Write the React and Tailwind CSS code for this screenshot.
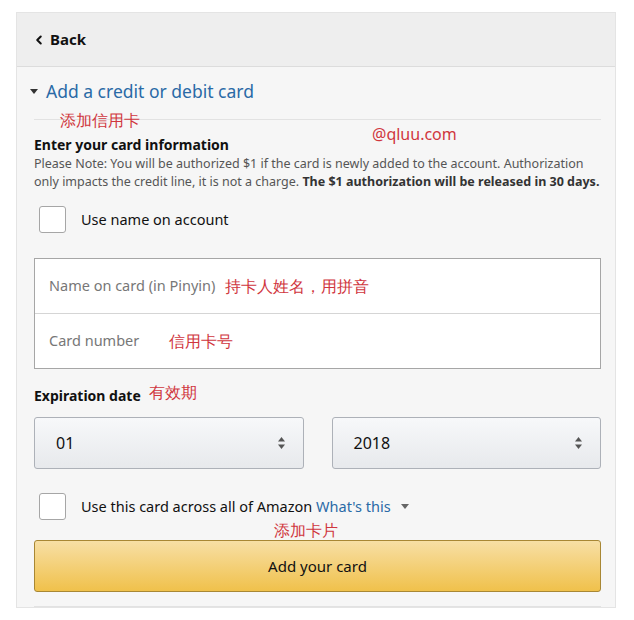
import { ChevronLeft } from 'lucide-react'

const red = 'text-[#d0363e]'

function Checkbox() {
  return <span className="block h-[27px] w-[27px] shrink-0 rounded-[3px] border border-[#a6a6a6] bg-white" />
}

function Updown() {
  return (
    <svg width="9" height="14" viewBox="0 0 9 14" className="shrink-0">
      <path d="M4.5 1 L8 5.5 H1 Z" fill="#555" />
      <path d="M4.5 13 L8 8.5 H1 Z" fill="#555" />
    </svg>
  )
}

function SelectBox({ value }) {
  return (
    <div className="flex h-[52px] flex-1 items-center justify-between rounded-[3px] border border-[#adb1b8] bg-[linear-gradient(#f7f8fa,#e7e9ec)] pl-[21px] pr-[17px] text-[16px] text-[#111]">
      <span>{value}</span>
      <Updown />
    </div>
  )
}

export default function App() {
  return (
    <div className="min-h-[620px] bg-white pt-[12px] font-['Noto_Sans','Open_Sans',sans-serif]">
      <div className="ml-[16px] w-[600px] border border-[#e4e4e4] bg-[#f6f6f6]">
        {/* header */}
        <div className="flex h-[54px] items-center gap-[4px] border-b border-[#dcdcdc] bg-[#eeeeee] pl-[15px] text-[15px] font-bold text-[#111]">
          <ChevronLeft className="h-[14px] w-[14px]" strokeWidth={3.5} />
          Back
        </div>

        <div className="pb-[14px] pl-[17px] pr-[14px]">
          <div className="ml-[-4px] flex h-[49px] items-center gap-[8px] pt-[1px]">
            <svg width="8" height="6" viewBox="0 0 8 6"><path d="M0 0 H8 L4 5 Z" fill="#333" /></svg>
            <span className="text-[17.5px] leading-none text-[#2a6aa6]">Add a credit or debit card</span>
          </div>

          <div className="relative h-[4px] border-b border-[#e2e2e2]">
            <span className={`absolute left-[26px] top-[-4px] text-[16px] leading-none ${red}`}>添加信用卡</span>
          </div>

          <div className="relative pt-[15px]">
            <span className={`absolute left-[338px] top-[6px] text-[16px] leading-none ${red}`}>@qluu.com</span>
            <div className="text-[14px] font-bold leading-[20px] text-[#111]">Enter your card information</div>
            <p className="mr-[-8px] text-[12.5px] leading-[18px] text-[#555]">
              Please Note: You will be authorized $1 if the card is newly added to the account. Authorization only impacts the credit line, it is not a charge.{' '}
              <b className="text-[#333]">The $1 authorization will be released in 30 days.</b>
            </p>
          </div>

          <label className="mt-[15px] flex items-center gap-[15px] pl-[5px] text-[14.5px] text-[#111]">
            <Checkbox />
            Use name on account
          </label>

          <div className="mt-[25px] border border-[#a6a6a6] bg-white text-[14.5px] text-[#777]">
            <div className="flex h-[55px] items-center border-b border-[#d5d5d5] pl-[14px]">
              <span>Name on card (in Pinyin)</span>
              <span className={`ml-[10px] text-[16px] ${red}`}>持卡人姓名，用拼音</span>
            </div>
            <div className="flex h-[54px] items-center pl-[14px]">
              <span>Card number</span>
              <span className={`ml-[30px] text-[16px] ${red}`}>信用卡号</span>
            </div>
          </div>

          <div className="mt-[15px] flex items-end gap-[8px]">
            <span className="text-[14px] font-bold text-[#111]">Expiration date</span>
            <span className={`relative top-[-3px] text-[16px] leading-[22px] ${red}`}>有效期</span>
          </div>

          <div className="mt-[11px] flex gap-[28px]">
            <SelectBox value="01" />
            <SelectBox value="2018" />
          </div>

          <label className="mt-[24px] flex items-center gap-[15px] pl-[5px] text-[14.5px] text-[#111]">
            <Checkbox />
            <span>
              Use this card across all of Amazon <span className="text-[#2a6aa6]">What's this</span>
            </span>
            <svg width="8" height="5" viewBox="0 0 8 5" className="ml-[-5px]"><path d="M0 0 H8 L4 5 Z" fill="#666" /></svg>
          </label>

          <div className={`h-[20px] pl-[240px] text-[16px] leading-[20px] ${red}`}>添加卡片</div>

          <button className="flex h-[52px] w-full items-center justify-center rounded-[3px] border border-[#a88734] bg-[linear-gradient(#f7dfa5,#f0c14b)] text-[15px] text-[#111]">
            Add your card
          </button>
        </div>
        <div className="ml-[17px] mr-[14px] border-t border-[#e2e2e2]" />
      </div>
    </div>
  )
}
